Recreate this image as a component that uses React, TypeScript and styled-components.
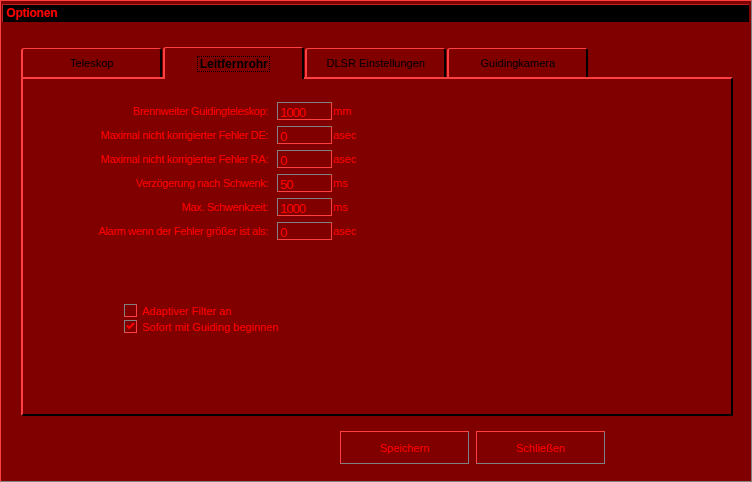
import styled, { createGlobalStyle } from "styled-components";

const colors = {
  bg: "#800000",
  light: "#ff4040",
  text: "#ff0000",
  gray: "#808080",
  dark: "#400000",
  black: "#000000",
};

const GlobalStyle = createGlobalStyle`
  html, body {
    margin: 0;
    padding: 0;
    background: ${colors.bg};
  }
  * {
    box-sizing: border-box;
  }
`;

const fields = [
  { label: "Brennweiter Guidingteleskop:", value: "1000", unit: "mm" },
  { label: "Maximal nicht korrigierter Fehler DE:", value: "0", unit: "asec" },
  { label: "Maximal nicht korrigierter Fehler RA:", value: "0", unit: "asec" },
  { label: "Verzögerung nach Schwenk:", value: "50", unit: "ms" },
  { label: "Max. Schwenkzeit:", value: "1000", unit: "ms" },
  { label: "Alarm wenn der Fehler größer ist als:", value: "0", unit: "asec" },
];

const tabs = ["Teleskop", "Leitfernrohr", "DLSR Einstellungen", "Guidingkamera"];

function App() {
  const activeTab = 1;

  return (
    <>
      <GlobalStyle />
      <Window>
        <TitleBar>Optionen</TitleBar>
        <Body>
          <TabRow>
            {tabs.map((tab, i) => (
              <Tab key={tab} $active={i === activeTab}>
                {i === activeTab ? <FocusLabel>{tab}</FocusLabel> : tab}
              </Tab>
            ))}
          </TabRow>
          <Panel>
            <Form>
              {fields.map((f) => (
                <FieldRow key={f.label}>
                  <Label>{f.label}</Label>
                  <TextInput defaultValue={f.value} />
                  <Unit>{f.unit}</Unit>
                </FieldRow>
              ))}
            </Form>
            <Checks>
              <CheckRow>
                <CheckBox />
                Adaptiver Filter an
              </CheckRow>
              <CheckRow>
                <CheckBox>
                  <svg width="11" height="11" viewBox="0 0 11 11">
                    <path
                      d="M2 4.5 L4.3 7 L8.8 2.3"
                      fill="none"
                      stroke={colors.text}
                      strokeWidth="2"
                    />
                  </svg>
                </CheckBox>
                Sofort mit Guiding beginnen
              </CheckRow>
            </Checks>
          </Panel>
          <ButtonRow>
            <Button>Speichern</Button>
            <Button>Schließen</Button>
          </ButtonRow>
        </Body>
      </Window>
    </>
  );
}

export default App;

const Window = styled.div`
  width: 752px;
  height: 482px;
  background: ${colors.bg};
  border-top: 1px solid ${colors.light};
  border-left: 1px solid ${colors.light};
  border-right: 1px solid ${colors.gray};
  border-bottom: 1px solid ${colors.gray};
  display: flex;
  flex-direction: column;
  font-family: "Liberation Sans", Arial, sans-serif;
  font-size: 11px;
`;

const TitleBar = styled.div`
  margin: 3px 2px 0 1px;
  height: 18px;
  background: ${colors.black};
  border-top: 1px solid #c02020;
  border-left: 1px solid #c02020;
  color: ${colors.text};
  font-weight: bold;
  font-size: 12px;
  line-height: 17px;
  padding-left: 3px;
  letter-spacing: -0.2px;
`;

const Body = styled.div`
  padding: 24px 18px 0 20px;
  display: flex;
  flex-direction: column;
`;

const TabRow = styled.div`
  display: flex;
  align-items: flex-end;
  gap: 1px;
  height: 31px;
  position: relative;
  z-index: 1;
`;

const Tab = styled.div<{ $active?: boolean }>`
  width: 141px;
  height: ${(p) => (p.$active ? "32px" : "29px")};
  margin-bottom: ${(p) => (p.$active ? "-2px" : "0")};
  background: ${colors.bg};
  border-style: solid;
  border-width: 1px 2px 0 2px;
  border-color: ${colors.light} ${colors.black} transparent ${colors.light};
  border-radius: 3px 3px 0 0;
  color: ${colors.black};
  font-weight: ${(p) => (p.$active ? "bold" : "normal")};
  font-size: ${(p) => (p.$active ? "12px" : "11px")};
  display: flex;
  align-items: center;
  justify-content: center;
  padding-top: ${(p) => (p.$active ? "1px" : "0")};
`;

const FocusLabel = styled.span`
  outline: 1px dotted ${colors.black};
  outline-offset: 0;
  padding: 0 1px;
  line-height: 14px;
`;

const Panel = styled.div`
  width: 712px;
  height: 339px;
  background: ${colors.bg};
  border-style: solid;
  border-width: 2px;
  border-color: ${colors.light} ${colors.black} ${colors.black} ${colors.light};
  padding: 23px 0 0 1px;
  display: flex;
  flex-direction: column;
`;

const Form = styled.div`
  display: flex;
  flex-direction: column;
  gap: 6px;
`;

const FieldRow = styled.div`
  display: grid;
  grid-template-columns: 253px 55px auto;
  align-items: center;
  height: 18px;
`;

const Label = styled.span`
  color: ${colors.text};
  text-align: right;
  padding-right: 9px;
  white-space: nowrap;
  letter-spacing: -0.3px;
`;

const TextInput = styled.input`
  width: 55px;
  height: 18px;
  margin: 0;
  padding: 2px 0 0 2px;
  background: ${colors.bg};
  color: ${colors.text};
  font-family: "Liberation Sans", Arial, sans-serif;
  font-size: 13px;
  letter-spacing: -1px;
  border-top: 1px solid ${colors.gray};
  border-left: 1px solid ${colors.gray};
  border-right: 1px solid ${colors.light};
  border-bottom: 1px solid ${colors.light};
  outline: none;
`;

const Unit = styled.span`
  color: ${colors.text};
  padding-left: 1px;
`;

const Checks = styled.div`
  margin: 64px 0 0 100px;
  display: flex;
  flex-direction: column;
  gap: 3px;
`;

const CheckRow = styled.label`
  display: flex;
  align-items: center;
  gap: 5px;
  color: ${colors.text};
  height: 13px;
`;

const CheckBox = styled.span`
  width: 13px;
  height: 13px;
  border-top: 1px solid ${colors.gray};
  border-left: 1px solid ${colors.gray};
  border-right: 1px solid ${colors.light};
  border-bottom: 1px solid ${colors.light};
  display: flex;
  align-items: center;
  justify-content: center;
`;

const ButtonRow = styled.div`
  display: flex;
  gap: 7px;
  padding: 15px 0 0 319px;
`;

const Button = styled.button`
  width: 129px;
  height: 33px;
  background: ${colors.bg};
  color: ${colors.text};
  font-family: "Liberation Sans", Arial, sans-serif;
  font-size: 11px;
  border-top: 1px solid ${colors.light};
  border-left: 1px solid ${colors.light};
  border-right: 1px solid ${colors.gray};
  border-bottom: 1px solid ${colors.gray};
  padding: 0;
`;
